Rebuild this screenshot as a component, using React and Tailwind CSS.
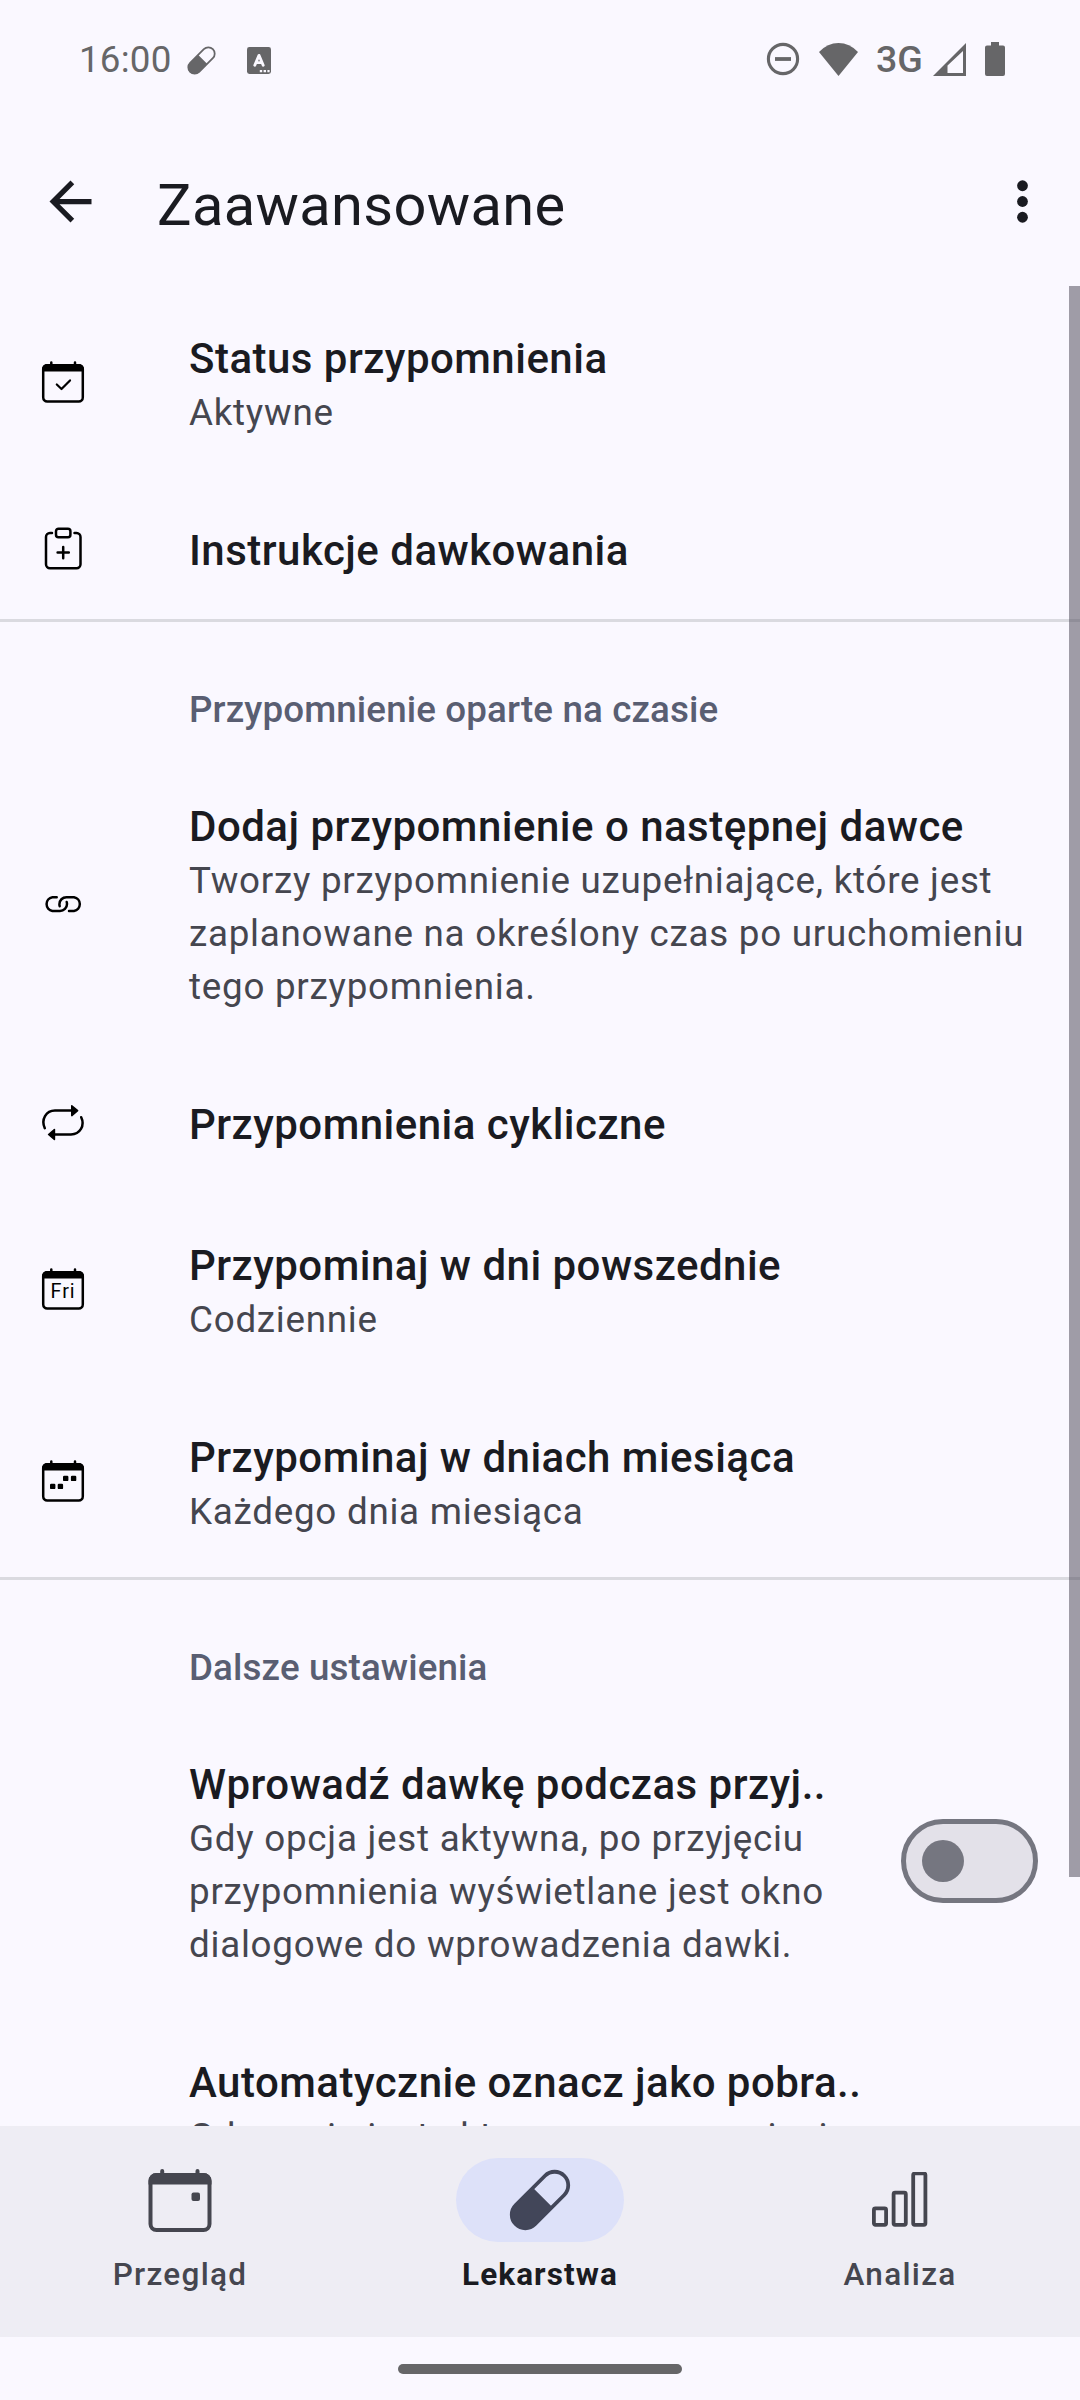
import React from "react";

/* ---------- status bar icons ---------- */

function Capsule({ className }) {
  return (
    <svg viewBox="-31 -31 62 62" className={className} fill="none">
      <g transform="rotate(45)">
        <rect x="-13.6" y="-34.3" width="27.2" height="68.6" rx="13.6" stroke="currentColor" strokeWidth="3.8" />
        <path d="M-14 -3.6H14V21a14 14 0 0 1-28 0Z" fill="currentColor" />
      </g>
    </svg>
  );
}

function KeyboardBadge() {
  return (
    <svg viewBox="0 0 24 27" className="h-[27px] w-[24px]" fill="none">
      <rect width="24" height="27" rx="2.4" fill="#666668" />
      <path d="M7.8 18.2 12 8.4l4.200 9.800M9.200 15.600h5.600" stroke="#faf8ff" strokeWidth="2.9" strokeLinecap="round" strokeLinejoin="round" />
      <path d="M12.8 23.1h2.4v2.2h-2.4zM16.6 23.1h2.4v2.2h-2.4zM20.4 23.1h2.2v2.2h-2.2z" fill="#faf8ff" />
    </svg>
  );
}

function StatusBar() {
  return (
    <div className="flex h-[118px] shrink-0 items-center pl-[79px] pr-[75px] text-[#666668]">
      <span className="w-[92px] whitespace-nowrap text-[36.75px] leading-[43px] tracking-[0.2px]">16:00</span>
      <Capsule className="ml-[16px] mt-[3px] h-[29px] w-[29px]" />
      <div className="ml-[31px] mt-[2px]">
        <KeyboardBadge />
      </div>
      <div className="ml-auto flex items-center">
        <svg viewBox="0 0 34 34" className="h-[34px] w-[34px]" fill="none" stroke="currentColor">
          <circle cx="17" cy="17" r="14.6" strokeWidth="3.1" />
          <path d="M9 17h16" strokeWidth="3.8" />
        </svg>
        <svg viewBox="0 0 39 33" className="ml-[19px] h-[33px] w-[39px]" fill="currentColor">
          <path d="M19.5 33 0 9Q8.500 0 19.500 0T39 9Z" />
        </svg>
        <span className="ml-[18px] w-[49px] whitespace-nowrap text-[37.5px] font-medium leading-[43px]">3G</span>
        <svg viewBox="0 0 33 33" className="ml-[8px] h-[33px] w-[33px]" fill="currentColor">
          <path fillRule="evenodd" d="M33 0V33H0ZM30 8 14.500 22.500V30H30Z" />
        </svg>
        <svg viewBox="0 0 20 34" className="ml-[19px] h-[34px] w-[20px]" fill="currentColor">
          <path d="M6 0h8v3.500h4a2 2 0 0 1 2 2V32a2 2 0 0 1-2 2H2a2 2 0 0 1-2-2V5.500a2 2 0 0 1 2-2h4Z" />
        </svg>
      </div>
    </div>
  );
}

/* ---------- toolbar ---------- */

function Toolbar() {
  return (
    <div className="flex h-[168px] shrink-0 items-center pl-[39px] pr-[26px] text-[#1a1b21]">
      <svg viewBox="0 0 24 24" className="mb-[2px] h-[63px] w-[63px]" fill="currentColor">
        <path d="M20 11H7.830l5.590-5.590L12 4l-8 8 8 8 1.410-1.410L7.830 13H20v-2z" />
      </svg>
      <h1 className="ml-[55px] mt-[5px] text-[57.75px] font-normal leading-[68px] tracking-[0.35px]">Zaawansowane</h1>
      <svg viewBox="0 0 24 24" className="mb-[2px] ml-auto h-[63px] w-[63px]" fill="currentColor">
        <circle cx="12" cy="6" r="2.05" />
        <circle cx="12" cy="12" r="2.05" />
        <circle cx="12" cy="18" r="2.05" />
      </svg>
    </div>
  );
}

/* ---------- preference icons, all on a 48px grid ---------- */

function PrefSvg({ children }) {
  return (
    <svg viewBox="0 0 48 48" className="h-[48px] w-[48px]" fill="none" stroke="#000" strokeWidth="2.5" strokeLinecap="round" strokeLinejoin="round">
      {children}
    </svg>
  );
}

function CalendarFrame({ children }) {
  return (
    <PrefSvg>
      <rect x="4.2" y="7.200" width="39.600" height="36.400" rx="4" />
      <path d="M3 13.500V11a5 5 0 0 1 5-5h32a5 5 0 0 1 5 5v2.500Z" fill="#000" stroke="none" />
      <path d="M12.300 4.400V7M36 4.400V7" />
      {children}
    </PrefSvg>
  );
}

const icons = {
  status: (
    <CalendarFrame>
      <path d="M17.800 26.500 22.500 31 31 22.400" strokeWidth="2.200" />
    </CalendarFrame>
  ),
  clipboard: (
    <PrefSvg>
      <path d="M13 8H11a4 4 0 0 0-4 4V39.300a4 4 0 0 0 4 4H37.500a4 4 0 0 0 4-4V12a4 4 0 0 0-4-4H35.500" />
      <rect x="17" y="3.700" width="14.400" height="8.600" rx="2.500" />
      <path d="M24.200 22V33.200M18.600 27.600H29.800" />
    </PrefSvg>
  ),
  link: (
    <PrefSvg>
      <path d="M17.700 18.200H13.400A7 7 0 0 0 13.400 32H21a7 7 0 0 0 7-7Q28 24 27.700 23" />
      <path d="M30 32H35A7 7 0 0 0 35 18.200H27.400a7 7 0 0 0-7 7Q20.400 26.200 20.700 27.200" />
    </PrefSvg>
  ),
  cycle: (
    <PrefSvg>
      <path d="M5.800 29.200C1.800 20.500 7 11.600 16 11.600H33" />
      <path d="M42.200 18.200C46.200 26.500 41 35.500 32 35.500H15" />
      <path d="M32.800 6.800V16.600L38.600 11.700ZM15.400 30.600V40.400L9.600 35.500Z" fill="#000" strokeWidth="1.600" />
    </PrefSvg>
  ),
  weekday: (
    <CalendarFrame>
      <text x="11.600" y="33.200" fontSize="19.800" fill="#000" stroke="none" fontFamily="Roboto, sans-serif" textLength="24">
        Fri
      </text>
    </CalendarFrame>
  ),
  monthday: (
    <CalendarFrame>
      <g fill="#000" stroke="none">
        <rect x="11" y="26.700" width="5.400" height="5.400" rx="1.200" />
        <rect x="18.700" y="26.700" width="5.400" height="5.400" rx="1.200" />
        <rect x="24" y="18.700" width="5.400" height="5.400" rx="1.200" />
        <rect x="31.900" y="18.700" width="5.400" height="5.400" rx="1.200" />
      </g>
    </CalendarFrame>
  ),
};

/* ---------- preference list ---------- */

function Preference({ icon, title, lines, toggle }) {
  return (
    <div className="flex shrink-0 items-center py-[42px] pl-[39px] pr-[42px]">
      <div className="w-[150px] shrink-0">{icon}</div>
      <div className="min-w-0 flex-1">
        <div className="whitespace-nowrap pt-[4px] text-[42px] font-medium leading-[53px] tracking-[0.48px] text-[#1a1b21]">{title}</div>
        {lines && (
          <div className="-mb-[3px] pt-px text-[36.75px] leading-[53px] tracking-[0.75px] text-[#45464f]">
            {lines.map((line) => (
              <div key={line} className="whitespace-nowrap">
                {line}
              </div>
            ))}
          </div>
        )}
      </div>
      {toggle && (
        <div className="flex h-[84px] w-[137px] shrink-0 items-center rounded-full border-[5px] border-[#757680] bg-[#e3e1e9] pl-[16px]">
          <div className="size-[42px] rounded-full bg-[#757680]" />
        </div>
      )}
    </div>
  );
}

function SectionTitle({ children }) {
  return (
    <div className="h-[135px] shrink-0 border-t-[3px] border-[#dadae0] pl-[189px] pt-[61px] text-[36.75px] font-medium leading-[53px] tracking-[0.12px] text-[#595e72]">
      {children}
    </div>
  );
}

/* ---------- bottom navigation ---------- */

function CalendarNavIcon() {
  return (
    <svg viewBox="0 0 66 66" className="mr-[1px] h-[66px] w-[66px]" fill="none">
      <rect x="3.500" y="8" width="59" height="55" rx="6" stroke="currentColor" strokeWidth="4" />
      <path d="M1.500 17.500V14a8 8 0 0 1 8-8h47a8 8 0 0 1 8 8v3.500Z" fill="currentColor" />
      <path d="M15.200 4V8M50.500 4V8" stroke="currentColor" strokeWidth="4" strokeLinecap="round" />
      <rect x="44.500" y="25.500" width="8.500" height="8.500" rx="2" fill="currentColor" />
    </svg>
  );
}

function BarsNavIcon() {
  return (
    <svg viewBox="0 0 56 56" className="h-[56px] w-[56px]" fill="none" stroke="currentColor" strokeWidth="3.800">
      <rect x="1.900" y="36.400" width="12.200" height="16.400" rx="1.500" />
      <rect x="21.600" y="20.700" width="12.200" height="32.100" rx="1.500" />
      <rect x="41.200" y="1.400" width="12.200" height="51.400" rx="1.500" />
    </svg>
  );
}

function NavItem({ label, icon, active }) {
  return (
    <div className="flex flex-1 flex-col items-center pt-[32px]">
      <div className={active ? "flex h-[84px] w-[168px] items-center justify-center rounded-full bg-[#dde1f9] text-[#424659]" : "flex h-[84px] w-[168px] items-center justify-center text-[#45464f]"}>
        {icon}
      </div>
      <div className={active ? "mt-[12px] text-[31.5px] font-bold leading-[42px] tracking-[1.1px] text-[#1a1b21]" : "mt-[12px] text-[31.5px] font-medium leading-[42px] tracking-[1.3px] text-[#45464f]"}>
        {label}
      </div>
    </div>
  );
}

export default function App() {
  return (
    <div className="flex h-[2400px] w-[1080px] flex-col overflow-hidden bg-[#faf8ff] font-['Roboto',sans-serif]">
      <StatusBar />
      <Toolbar />
      <div className="relative flex h-[1840px] shrink-0 flex-col overflow-hidden">
        <Preference icon={icons.status} title="Status przypomnienia" lines={["Aktywne"]} />
        <Preference icon={icons.clipboard} title="Instrukcje dawkowania" />
        <SectionTitle>Przypomnienie oparte na czasie</SectionTitle>
        <Preference
          icon={icons.link}
          title="Dodaj przypomnienie o następnej dawce"
          lines={["Tworzy przypomnienie uzupełniające, które jest", "zaplanowane na określony czas po uruchomieniu", "tego przypomnienia."]}
        />
        <Preference icon={icons.cycle} title="Przypomnienia cykliczne" />
        <Preference icon={icons.weekday} title="Przypominaj w dni powszednie" lines={["Codziennie"]} />
        <Preference icon={icons.monthday} title="Przypominaj w dniach miesiąca" lines={["Każdego dnia miesiąca"]} />
        <SectionTitle>Dalsze ustawienia</SectionTitle>
        <Preference
          title="Wprowadź dawkę podczas przyj.."
          lines={["Gdy opcja jest aktywna, po przyjęciu", "przypomnienia wyświetlane jest okno", "dialogowe do wprowadzenia dawki."]}
          toggle
        />
        <Preference title="Automatycznie oznacz jako pobra.." lines={["Gdy opcja jest aktywna, przypomnienie"]} />
        <div className="absolute right-0 top-0 h-[1591px] w-[11px] bg-[#54505f]/55" />
      </div>
      <div className="flex h-[211px] shrink-0 bg-[#eeedf4]">
        <NavItem label="Przegląd" icon={<CalendarNavIcon />} />
        <NavItem label="Lekarstwa" icon={<Capsule className="h-[62px] w-[62px]" />} active />
        <NavItem label="Analiza" icon={<BarsNavIcon />} />
      </div>
      <div className="flex h-[63px] shrink-0 justify-center pt-[27px]">
        <div className="h-[10px] w-[284px] rounded-full bg-[#666668]" />
      </div>
    </div>
  );
}
